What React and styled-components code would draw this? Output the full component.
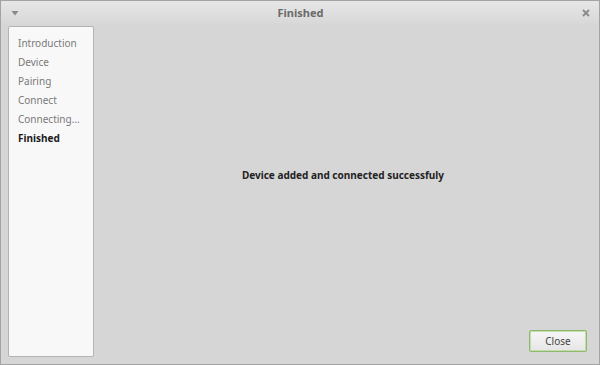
import React from 'react';
import styled, { createGlobalStyle } from 'styled-components';

const GlobalStyle = createGlobalStyle`
  html, body { margin: 0; padding: 0; }
  body {
    font-family: "Noto Sans", "Open Sans", sans-serif;
    background: #d6d6d6;
  }
`;

const steps = ['Introduction', 'Device', 'Pairing', 'Connect', 'Connecting…', 'Finished'];

const Window = styled.div`
  width: 600px;
  height: 365px;
  box-sizing: border-box;
  border: 1px solid #a3a3a3;
  background: #d6d6d6;
  display: flex;
  flex-direction: column;
`;

const TitleBar = styled.div`
  height: 23px;
  flex: none;
  display: flex;
  align-items: center;
  justify-content: space-between;
  padding: 0 8px 0 9px;
  background: linear-gradient(#e6e6e6, #d8d8d8);
`;

const Title = styled.div`
  font-size: 11px;
  font-weight: bold;
  color: #6b6b6b;
`;

const TitleIcon = styled.svg`
  width: 10px;
  height: 10px;
  display: block;
`;

const Body = styled.div`
  flex: 1;
  display: flex;
  padding: 2px 12px 7px 7px;
  min-height: 0;
`;

const Sidebar = styled.div`
  width: 86px;
  flex: none;
  background: #f8f8f8;
  border: 1px solid #b3b3b3;
  border-radius: 2px;
  padding: 7px 0 0 9px;
  box-sizing: border-box;
  display: flex;
  flex-direction: column;
`;

const Step = styled.div`
  font-size: 10px;
  line-height: 19px;
  color: ${(p) => (p.$active ? '#1a1a1a' : '#787878')};
  font-weight: ${(p) => (p.$active ? 'bold' : 'normal')};
  white-space: nowrap;
`;

const Content = styled.div`
  flex: 1;
  display: flex;
  flex-direction: column;
  align-items: center;
  padding: 0 0 5px 5px;
`;

const Message = styled.div`
  flex: 1;
  display: flex;
  align-items: center;
  font-size: 10px;
  font-weight: bold;
  color: #222;
  padding-bottom: 6px;
`;

const Footer = styled.div`
  align-self: stretch;
  display: flex;
  justify-content: flex-end;
`;

const Button = styled.button`
  width: 58px;
  height: 22px;
  font-family: inherit;
  font-size: 10px;
  color: #444;
  background: linear-gradient(#f6f6f6, #e6e6e6);
  border: 1px solid #8fb86a;
  border-radius: 2px;
  box-shadow: inset 0 0 0 1px #c5dcae;
  padding: 0;
`;

export default function App() {
  return (
    <>
      <GlobalStyle />
      <Window>
        <TitleBar>
          <TitleIcon viewBox="0 0 10 10">
            <path d="M1.5 3 L8.5 3 L5 7.5 Z" fill="#8a8a8a" />
          </TitleIcon>
          <Title>Finished</Title>
          <TitleIcon viewBox="0 0 10 10">
            <path d="M2 2 L8 8 M8 2 L2 8" stroke="#8a8a8a" strokeWidth="1.8" />
          </TitleIcon>
        </TitleBar>
        <Body>
          <Sidebar>
            {steps.map((s) => (
              <Step key={s} $active={s === 'Finished'}>{s}</Step>
            ))}
          </Sidebar>
          <Content>
            <Message>Device added and connected successfuly</Message>
            <Footer>
              <Button>Close</Button>
            </Footer>
          </Content>
        </Body>
      </Window>
    </>
  );
}
